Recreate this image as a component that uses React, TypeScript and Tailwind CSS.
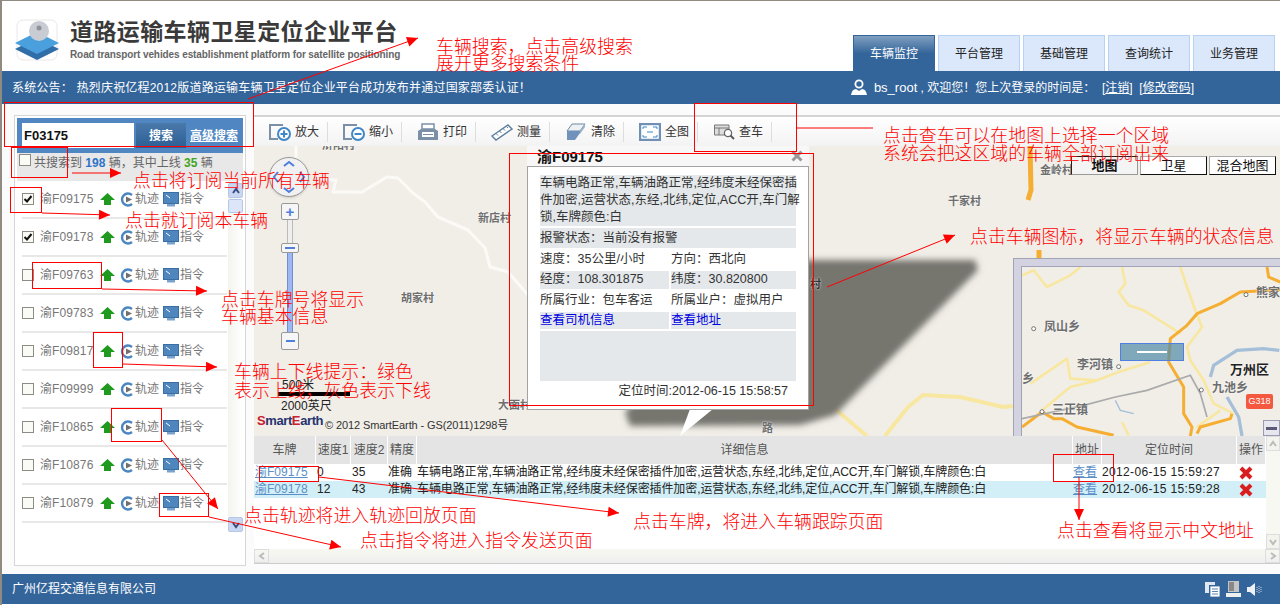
const plates: [string, boolean][] = [
  ['渝F09175', true],
  ['渝F09178', true],
  ['渝F09763', false],
  ['渝F09783', false],
  ['渝F09817', false],
  ['渝F09999', false],
  ['渝F10865', false],
  ['渝F10876', false],
  ['渝F10879', false],
];

const detail =
  '车辆电路正常,车辆油路正常,经纬度未经保密插件加密,运营状态,东经,北纬,定位,ACC开,车门解锁,车牌颜色:白';

const tableCols = 'grid-cols-[62px_35px_37px_29px_656px_29px_135px_29px]';

function Check({ on }: { on?: boolean }) {
  return (
    <span className="flex h-[12px] w-[12px] shrink-0 items-center justify-center border border-[#8c8c84] bg-[#fbfbf6]">
      {on && (
        <svg width="10" height="10" viewBox="0 0 10 10">
          <path d="M1.5 5 L4 7.5 L8.5 2" fill="none" stroke="#111" strokeWidth="2" />
        </svg>
      )}
    </span>
  );
}

function Chevron({ dir, color }: { dir: 'up' | 'down' | 'left' | 'right'; color: string }) {
  const d = {
    up: 'M2 7 L5 3 L8 7',
    down: 'M2 3 L5 7 L8 3',
    left: 'M7 2 L3 5 L7 8',
    right: 'M3 2 L7 5 L3 8',
  }[dir];
  return (
    <svg width="10" height="10" viewBox="0 0 10 10">
      <path d={d} fill="none" stroke={color} strokeWidth="2" />
    </svg>
  );
}

function UpArrow() {
  return (
    <svg width="15" height="12" viewBox="0 0 15 12" className="shrink-0">
      <path d="M7.5 0 L15 7 L11 7 L11 12 L4 12 L4 7 L0 7 Z" fill="#1f9a1f" />
    </svg>
  );
}

function TrackIcon() {
  return (
    <svg width="14" height="15" viewBox="0 0 14 15" className="shrink-0">
      <path d="M12 3 A6 6 0 1 0 12 12" fill="none" stroke="#4b86c0" strokeWidth="2.4" />
      <path d="M6 4.5 L12 7.5 L6 10.5 Z" fill="#6f6f6f" />
    </svg>
  );
}

function MonitorIcon() {
  return (
    <svg width="16" height="15" viewBox="0 0 16 15" className="shrink-0">
      <rect x="0.5" y="0.5" width="15" height="11" fill="#4f86bd" stroke="#3a6ea5" />
      <path d="M3 3 L7 6" stroke="#fff" strokeWidth="1" />
      <rect x="4" y="12" width="8" height="2.5" fill="#7aa3cc" />
    </svg>
  );
}

function ZoomIcon({ plus }: { plus?: boolean }) {
  return (
    <svg width="22" height="18" viewBox="0 0 22 18" className="shrink-0">
      <path d="M14 2 H1 V16 H9" fill="none" stroke="#7b8fa6" strokeWidth="2" />
      <circle cx="15" cy="11" r="6" fill="#fff" stroke="#3f87c7" strokeWidth="2" />
      <path d="M11.5 11 H18.5" stroke="#3f87c7" strokeWidth="2" />
      {plus && <path d="M15 7.5 V14.5" stroke="#3f87c7" strokeWidth="2" />}
    </svg>
  );
}

function PrintIcon() {
  return (
    <svg width="22" height="18" viewBox="0 0 22 18" className="shrink-0">
      <path d="M5 1 H17 V6 H5 Z" fill="#fff" stroke="#7b8fa6" strokeWidth="1.5" />
      <path d="M1 8 L4 6 H18 L21 8 V17 H1 Z" fill="#7b8fa6" />
      <rect x="5" y="9" width="12" height="5" fill="#fff" />
      <path d="M6 11.5 H16" stroke="#7b8fa6" />
    </svg>
  );
}

function RulerIcon() {
  return (
    <svg width="22" height="18" viewBox="0 0 22 18" className="shrink-0">
      <path d="M1 13 L17 2 L21 6 L5 17 Z" fill="#fff" stroke="#5f7d9c" strokeWidth="1.4" />
      <path d="M5 10.5 L7 12.5 M8.5 8 L10.5 10 M12 5.5 L14 7.5 M15.5 3.5 L17 5" stroke="#5f7d9c" />
    </svg>
  );
}

function EraserIcon() {
  return (
    <svg width="20" height="18" viewBox="0 0 20 18" className="shrink-0">
      <path d="M6 1 H19 L14 8 H1 Z" fill="#eef1f4" stroke="#6f8aa6" />
      <path d="M1 8 H14 V10 L9 17 H1 Z" fill="#6f93bb" />
      <path d="M14 8 L19 1 V4 L14 11 Z" fill="#9db3c9" />
    </svg>
  );
}

function FullIcon() {
  return (
    <svg width="22" height="18" viewBox="0 0 22 18" className="shrink-0">
      <rect x="1" y="1" width="20" height="16" fill="#fff" stroke="#6f8fb4" strokeWidth="2.4" />
      <path d="M4 6 V4 H8 M18 6 V4 H14 M4 12 V14 H8 M18 12 V14 H14 M8 9 H14" fill="none" stroke="#3f87c7" />
    </svg>
  );
}

function FindIcon() {
  return (
    <svg width="21" height="16" viewBox="0 0 21 16" className="shrink-0">
      <path d="M0.5 1 H15 V11 H0.5 Z M0.5 4 H15 M5 4 V11" fill="#ddd" stroke="#777" />
      <circle cx="14" cy="9" r="3.6" fill="#fff" stroke="#666" strokeWidth="1.3" />
      <path d="M16.5 11.5 L20 15" stroke="#555" strokeWidth="1.8" />
    </svg>
  );
}

const tools = [
  { label: '放大', icon: <ZoomIcon plus /> },
  { label: '缩小', icon: <ZoomIcon /> },
  { label: '打印', icon: <PrintIcon /> },
  { label: '测量', icon: <RulerIcon /> },
  { label: '清除', icon: <EraserIcon /> },
  { label: '全图', icon: <FullIcon /> },
  { label: '查车', icon: <FindIcon /> },
];

function Arrow({ pts, head = true }: { pts: number[][]; head?: boolean }) {
  const a = pts[pts.length - 2];
  const b = pts[pts.length - 1];
  const ang = Math.atan2(b[1] - a[1], b[0] - a[0]);
  const p = (len: number, off: number) => {
    const x = b[0] - Math.cos(ang) * len - Math.sin(ang) * off;
    const y = b[1] - Math.sin(ang) * len + Math.cos(ang) * off;
    return `${x},${y}`;
  };
  return (
    <g>
      <polyline points={pts.map((q) => q.join(',')).join(' ')} fill="none" stroke="#f00" strokeWidth="1" />
      {head && <polygon points={`${b[0]},${b[1]} ${p(11, 5)} ${p(11, -5)}`} fill="#f00" />}
    </g>
  );
}

function Note({ className, children }: { className: string; children: React.ReactNode }) {
  return (
    <div className={`absolute whitespace-nowrap text-[17.9px] leading-[18px] font-light text-[#f00] ${className}`}>
      {children}
    </div>
  );
}

function Box({ className }: { className: string }) {
  return <div className={`absolute border border-[#f00] ${className}`} />;
}

function MapLabel({ className, children }: { className: string; children: React.ReactNode }) {
  return (
    <span className={`absolute whitespace-nowrap text-[11px] leading-[13px] font-bold text-[#6e6e6e] [text-shadow:0_0_2px_#fff] ${className}`}>
      {children}
    </span>
  );
}

function MapControls() {
  return (
    <>
      <div className="absolute left-[15px] top-[11px] flex h-[40px] w-[40px] items-center justify-center rounded-full border border-[#999] bg-[#f1f1f1] shadow">
        <svg width="34" height="34" viewBox="0 0 34 34">
          <path d="M12 6 L17 2 L22 6 M12 28 L17 32 L22 28 M6 12 L2 17 L6 22 M28 12 L32 17 L28 22" fill="none" stroke="#4f7fdc" strokeWidth="2" />
        </svg>
      </div>
      <div className="absolute left-[27px] top-[57px] flex w-[18px] flex-col items-center">
        <div className="flex h-[17px] w-[18px] items-center justify-center rounded-[2px] border border-[#999] bg-[#f6f6f6] text-[15px] leading-none font-bold text-[#4f7fdc]">+</div>
        <div className="h-[23px] w-[6px] border-x border-[#bbb] bg-[#eee]" />
        <div className="flex h-[10px] w-[18px] items-center justify-center rounded-[2px] border border-[#999] bg-[#f6f6f6]">
          <div className="h-[2px] w-[10px] bg-[#4f7fdc]" />
        </div>
        <div className="h-[79px] w-[6px] border-x border-[#6f8fd0] bg-[#9db8f2]" />
        <div className="flex h-[18px] w-[18px] items-center justify-center rounded-[2px] border border-[#999] bg-[#f6f6f6]">
          <div className="h-[2px] w-[9px] bg-[#4f7fdc]" />
        </div>
      </div>
    </>
  );
}

function Overview() {
  return (
    <div className="absolute left-[759px] top-[112px] h-[178px] w-[267px] border-l border-t border-[#a3a3b8] bg-[#d2d2e0] pl-[7px] pt-[7px]">
      <div className="relative h-[170px] w-[259px] overflow-hidden border-l border-t border-[#a3a3b8] bg-[#f1eee8]">
        <svg width="258" height="169" viewBox="65 50 774 507" className="absolute inset-0">
          <g fill="none" stroke="#f8e7a0" strokeWidth="8" strokeLinejoin="round">
            <path d="M65 75 L100 60 L140 110 L210 75 L240 50" />
            <path d="M365 50 L375 100 L355 125 L385 165 L430 180 L470 205 L540 250" />
            <path d="M540 50 L560 110 L585 180 L605 230 L560 290 L570 330 L610 390 L640 460 L700 490" />
            <path d="M90 400 L200 325 L210 385 L290 390 L355 365 L450 335" />
            <path d="M125 480 L210 410 L290 390" />
            <path d="M365 515 L385 555 M590 530 L660 480" />
          </g>
          <g fill="none" stroke="#f5ae32" strokeWidth="9" strokeLinejoin="round">
            <path d="M800 50 L805 80 L840 95" />
            <path d="M840 118 L720 125 L660 160 L590 190 L560 225 L510 265 L505 335 L550 410 L550 490 L575 530 L570 557" />
            <path d="M65 530 L125 485 L160 505 L185 505 L230 530 L340 555" />
            <path d="M590 550 L600 530 L690 505 L695 490" />
          </g>
          <path d="M65 505 L250 465 L345 440 L440 420 L570 375 L600 430 L620 500" fill="none" stroke="#aaa" strokeWidth="5" />
          <path d="M630 380 L640 345 L710 300 L790 295 L837 300 M680 440 L715 500 L725 557" fill="none" stroke="#a5bfd8" strokeWidth="10" />
          <path d="M345 450 L360 480 L400 490" fill="none" stroke="#a5bfd8" strokeWidth="4" />
          {[[100, 235], [355, 349], [603, 419], [125, 484], [737, 133]].map(([x, y]) => (
            <circle key={x} cx={x} cy={y} r="6" fill="#fff" stroke="#555" strokeWidth="2.4" />
          ))}
        </svg>
        <MapLabel className="left-[22px] top-[54px] text-[12px]">凤山乡</MapLabel>
        <MapLabel className="left-[55px] top-[92px] text-[12px]">李河镇</MapLabel>
        <MapLabel className="left-[190px] top-[115px] text-[12px]">九池乡</MapLabel>
        <MapLabel className="left-[30px] top-[137px] text-[12px]">三正镇</MapLabel>
        <MapLabel className="left-[234px] top-[20px] text-[12px]">熊家</MapLabel>
        <MapLabel className="left-0 top-[106px] text-[12px]">乡</MapLabel>
        <MapLabel className="left-[208px] top-[96px] text-[13px] !text-[#222]">万州区</MapLabel>
        <span className="absolute left-[224px] top-[127px] flex h-[15px] w-[27px] items-center justify-center rounded-[2px] bg-[#f4583f] text-[9px] text-white">G318</span>
        <div className="absolute left-[98px] top-[76px] flex h-[18px] w-[64px] items-center justify-center border border-[#4f7fe0] bg-[#4f8aa8]/70">
          <div className="h-[2px] w-[30px] bg-white" />
        </div>
        <div className="absolute left-[241px] top-[153px] flex h-[16px] w-[17px] items-center justify-center border border-[#9a9ab0] bg-[#e6e6ee]">
          <div className="h-[3px] w-[11px] bg-[#5a5a78]" />
        </div>
      </div>
    </div>
  );
}

function Popup() {
  return (
    <div className="absolute left-[273px] top-0 w-[282px] text-[12.5px] leading-[17px] text-[#333]">
      <div className="flex h-[20px] items-center justify-between bg-[#f7f7f7] pl-[10px] pr-[6px]">
        <span className="text-[15px] font-bold text-[#111]">渝F09175</span>
        <svg width="12" height="12" viewBox="0 0 12 12">
          <path d="M1.5 1.5 L10.5 10.5 M10.5 1.5 L1.5 10.5" stroke="#999" strokeWidth="3" />
        </svg>
      </div>
      <div className="flex h-[244px] flex-col gap-[2px] border border-[#a3a3a3] bg-white px-[12px] pt-[8px]">
        <div className="h-[51px] whitespace-nowrap bg-[#e4e8ea]">
          车辆电路正常,车辆油路正常,经纬度未经保密插
          <br />
          件加密,运营状态,东经,北纬,定位,ACC开,车门解
          <br />
          锁,车牌颜色:白
        </div>
        <div className="flex h-[20px] items-center bg-[#e4e8ea]">报警状态：当前没有报警</div>
        <div className="grid h-[19px] grid-cols-[129px_125px] items-center gap-[2px]">
          <span>速度：35公里/小时</span>
          <span>方向：西北向</span>
        </div>
        <div className="grid h-[18px] grid-cols-[129px_125px] gap-[2px]">
          <span className="bg-[#e4e8ea]">经度：108.301875</span>
          <span className="bg-[#e4e8ea]">纬度：30.820800</span>
        </div>
        <div className="grid h-[19px] grid-cols-[129px_125px] items-center gap-[2px]">
          <span>所属行业：包车客运</span>
          <span>所属业户：虚拟用户</span>
        </div>
        <div className="grid h-[17px] grid-cols-[129px_125px] gap-[2px] text-[#0000e0]">
          <span className="bg-[#e4e8ea]">查看司机信息</span>
          <span className="bg-[#e4e8ea]">查看地址</span>
        </div>
        <div className="h-[50px] bg-[#e4e8ea]" />
        <div className="pr-[8px] text-right">定位时间:2012-06-15 15:58:57</div>
      </div>
    </div>
  );
}

function MapView() {
  return (
    <div className="relative h-[290px] shrink-0 overflow-hidden bg-[#f1eee8]">
      <svg width="1026" height="290" viewBox="254 146 1026 290" className="absolute inset-0">
        <defs>
          <filter id="shadow-blur">
            <feGaussianBlur stdDeviation="3" />
          </filter>
        </defs>
        <g fill="none" stroke="#fbfaf6" strokeWidth="3" strokeLinejoin="round">
          <path d="M296 146 V160" />
          <path d="M320 179 L336 180 L333 192 L362 192 L387 177 L398 178 L413 193 L425 202 L438 217 L468 230 L485 248 L490 267 L508 272 L528 295" />
        </g>
        <path d="M1030 146 L1031 190 L1028 200 M1039 250 V258" fill="none" stroke="#f5ae32" strokeWidth="5" />
        <g fill="none" stroke="#f8e7a0" strokeWidth="4" strokeLinejoin="round">
          <path d="M885 436 L908 407 L923 395 L960 397 L1003 407 L1013 406" />
          <path d="M808 386 L867 436" />
        </g>
        <polygon points="625,412 780,260 975,260 978,270 835,415 800,425 630,426" fill="#76746e" filter="url(#shadow-blur)" />
        <polygon points="690,409 713,409 680,436" fill="#fff" />
      </svg>
      <MapLabel className="left-[68px] top-[-7px]">浒阳村</MapLabel>
      <MapLabel className="left-[224px] top-[66px]">新店村</MapLabel>
      <MapLabel className="left-[147px] top-[146px]">胡家村</MapLabel>
      <MapLabel className="left-[244px] top-[253px]">大面村</MapLabel>
      <MapLabel className="left-[556px] top-[132px] !text-[#333]">村</MapLabel>
      <MapLabel className="left-[508px] top-[276px]">路</MapLabel>
      <MapLabel className="left-[694px] top-[49px]">千家村</MapLabel>
      <MapLabel className="left-[786px] top-[18px]">金岭村</MapLabel>
      <MapControls />
      <div className="absolute left-[817px] top-[10px] flex gap-[2px] text-[13px] leading-[17px] text-[#111]">
        <div className="flex h-[19px] w-[67px] items-center justify-center border border-b-[#999] border-l-[#222] border-r-[#999] border-t-[#222] bg-[#f4f4f4] font-bold">地图</div>
        <div className="flex h-[19px] w-[67px] items-center justify-center border border-b-[#111] border-l-[#aaa] border-r-[#111] border-t-[#aaa] bg-white">卫星</div>
        <div className="flex h-[19px] w-[67px] items-center justify-center border border-b-[#111] border-l-[#aaa] border-r-[#111] border-t-[#aaa] bg-white">混合地图</div>
      </div>
      <div className="absolute left-[24px] top-[233px] w-[72px] text-[12px] leading-[13px] text-[#222]">
        <div className="pl-[4px]">500米</div>
        <div className="h-[4px] bg-black" />
        <div className="pl-[3px] pt-[4px]">2000英尺</div>
      </div>
      <div className="absolute left-[3px] top-[267px] text-[13px] leading-[16px] font-bold tracking-[-0.4px] text-[#27346f]">
        <span className="text-[#c8202c]">S</span>mart<span className="text-[#c8202c]">E</span>arth
      </div>
      <div className="absolute left-[71px] top-[272px] text-[11px] leading-[14px] tracking-[-0.1px] text-[#333]">© 2012 SmartEarth - GS(2011)1298号</div>
      <Popup />
      <Overview />
    </div>
  );
}

function ResultRow({ plate, speed, speed2, time, alt }: { plate: string; speed: string; speed2: string; time: string; alt?: boolean }) {
  return (
    <div className={`grid h-[17px] items-center whitespace-nowrap text-[12px] leading-[17px] text-[#222] ${tableCols} ${alt ? 'bg-[#d2eef6]' : 'bg-white'}`}>
      <span className="pl-px text-[#5b8fc8] underline">{plate}</span>
      <span className="pl-px">{speed}</span>
      <span className="pl-px">{speed2}</span>
      <span>准确</span>
      <span className="tracking-[-0.1px]">{detail}</span>
      <span className="text-[#5b8fc8] underline">查看</span>
      <span className="tracking-[0.35px]">{time}</span>
      <span className="flex pl-[2px]">
        <svg width="14" height="14" viewBox="0 0 14 14">
          <path d="M2 2 L12 12 M12 2 L2 12" stroke="#d81e1e" strokeWidth="4" />
        </svg>
      </span>
    </div>
  );
}

function ResultTable() {
  const heads = ['车牌', '速度1', '速度2', '精度', '详细信息', '地址', '定位时间', '操作'];
  return (
    <div className="flex h-[128px] flex-col border-b border-[#ccc]">
      <div className="flex min-h-0 flex-1">
        <div className="flex-1 bg-white">
          <div className={`grid h-[28px] bg-[#e4e4e4] text-[12px] text-[#555] ${tableCols}`}>
            {heads.map((h) => (
              <span key={h} className="flex items-center justify-center whitespace-nowrap border-r border-white">{h}</span>
            ))}
          </div>
          <ResultRow plate="渝F09175" speed="0" speed2="35" time="2012-06-15 15:59:27" />
          <ResultRow plate="渝F09178" speed="12" speed2="43" time="2012-06-15 15:59:28" alt />
        </div>
        <div className="flex w-[14px] flex-col justify-between bg-[#f8f8f2]">
          <div className="flex h-[15px] items-center justify-center border border-[#ddd] bg-[#f4f4ee]"><Chevron dir="up" color="#bbb" /></div>
          <div className="flex h-[15px] items-center justify-center border border-[#ddd] bg-[#f4f4ee]"><Chevron dir="down" color="#bbb" /></div>
        </div>
      </div>
      <div className="flex h-[14px] justify-between bg-gradient-to-b from-[#f8f8f2] to-[#eee]">
        <div className="flex w-[15px] items-center justify-center border border-[#ddd]"><Chevron dir="left" color="#bbb" /></div>
        <div className="flex w-[15px] items-center justify-center border border-[#ddd]"><Chevron dir="right" color="#bbb" /></div>
      </div>
    </div>
  );
}

function VehiclePanel() {
  return (
    <div className="h-[451px] w-[232px] shrink-0 border border-[#d6d6d6] bg-white p-[2px] text-[12px]">
      <div className="flex h-[35px] items-center bg-[#5086c1] pl-[5px]">
        <input readOnly value="F03175" className="h-[25px] w-[112px] bg-white pl-[2px] text-[13px] font-bold text-[#111] outline-none" />
        <button className="ml-[2px] h-[25px] w-[50px] bg-gradient-to-b from-[#4a79ab] to-[#2c5f94] text-[12px] font-bold text-white">搜索</button>
        <a className="ml-[4px] text-[12px] font-bold text-white underline">高级搜索</a>
      </div>
      <div className="flex h-[28px] items-start gap-[3px] bg-[#e8e8e8] pl-[2px] pt-px text-[#666]">
        <Check />
        <span>
          共搜索到 <b className="text-[#2e74c9]">198</b> 辆，其中上线 <b className="text-[#3fa51f]">35</b> 辆
        </span>
      </div>
      <div className="flex">
        <div className="ml-[5px] w-[206px]">
          {plates.map(([plate, on]) => (
            <div key={plate} className="flex h-[38px] items-center border-b-2 border-[#e8e8e8] text-[#777]">
              <Check on={on} />
              <span className="ml-[6px] w-[60px] tracking-[0.1px]">{plate}</span>
              <UpArrow />
              <span className="ml-[5px]"><TrackIcon /></span>
              <span className="ml-px">轨迹</span>
              <span className="ml-[4px]"><MonitorIcon /></span>
              <span className="ml-px">指令</span>
            </div>
          ))}
        </div>
        <div className="ml-[1px] flex h-[351px] w-[15px] flex-col gap-px bg-gradient-to-r from-[#f4f4ee] to-white pt-[2px]">
          <div className="flex h-[15px] shrink-0 items-center justify-center rounded-[2px] border border-[#b7c7ea] bg-[#c9d7f3]"><Chevron dir="up" color="#3a4f80" /></div>
          <div className="h-[14px] shrink-0 rounded-[2px] border border-[#b7c7ea] bg-[#dde6f8]" />
          <div className="mt-auto flex h-[15px] shrink-0 items-center justify-center rounded-[2px] border border-[#b7c7ea] bg-[#c9d7f3]"><Chevron dir="down" color="#3a4f80" /></div>
        </div>
      </div>
    </div>
  );
}

function Annotations() {
  return (
    <>
      <svg width="1280" height="605" className="pointer-events-none absolute inset-0">
        <Arrow pts={[[248, 99], [418, 38]]} />
        <Arrow pts={[[72, 173], [121, 173]]} />
        <Arrow pts={[[42, 213], [77, 214], [110, 215]]} />
        <Arrow pts={[[102, 289], [207, 291]]} />
        <Arrow pts={[[123, 364], [217, 367]]} />
        <Arrow pts={[[162, 440], [218, 509]]} />
        <Arrow pts={[[209, 517], [341, 547]]} />
        <Arrow pts={[[319, 477], [619, 513]]} />
        <Arrow pts={[[1079, 477], [1079, 520]]} />
        <Arrow pts={[[797, 128], [873, 128]]} head={false} />
        <Arrow pts={[[827, 287], [955, 235]]} />
      </svg>
      <Box className="left-[4px] top-[102px] h-[45px] w-[250px]" />
      <Box className="left-[11px] top-[147px] h-[31px] w-[57px]" />
      <Box className="left-[10px] top-[187px] h-[26px] w-[32px]" />
      <Box className="left-[32px] top-[262px] h-[27px] w-[70px]" />
      <Box className="left-[93px] top-[332px] h-[36px] w-[30px]" />
      <Box className="left-[111px] top-[408px] h-[34px] w-[51px]" />
      <Box className="left-[159px] top-[493px] h-[24px] w-[50px]" />
      <Box className="left-[509px] top-[153px] h-[253px] w-[305px]" />
      <Box className="left-[694px] top-[103px] h-[49px] w-[103px]" />
      <Box className="left-[259px] top-[466px] h-[16px] w-[60px]" />
      <Box className="left-[1053px] top-[454px] h-[28px] w-[61px]" />
      <Note className="left-[436px] top-[38px]">车辆搜索，点击高级搜索</Note>
      <Note className="left-[436px] top-[55px]">展开更多搜索条件</Note>
      <Note className="left-[883px] top-[127px]">点击查车可以在地图上选择一个区域</Note>
      <Note className="left-[883px] top-[145px]">系统会把这区域的车辆全部订阅出来</Note>
      <Note className="left-[133px] top-[172px]">点击将订阅当前所有车辆</Note>
      <Note className="left-[125px] top-[212px]">点击就订阅本车辆</Note>
      <Note className="left-[221px] top-[291px]">点击车牌号将显示</Note>
      <Note className="left-[221px] top-[308px]">车辆基本信息</Note>
      <Note className="left-[234px] top-[363px]">车辆上下线提示：绿色</Note>
      <Note className="left-[234px] top-[382px]">表示上线，灰色表示下线</Note>
      <Note className="left-[970px] top-[228px]">点击车辆图标，将显示车辆的状态信息</Note>
      <Note className="left-[244px] top-[507px]">点击轨迹将进入轨迹回放页面</Note>
      <Note className="left-[360px] top-[532px]">点击指令将进入指令发送页面</Note>
      <Note className="left-[633px] top-[513px]">点击车牌，将进入车辆跟踪页面</Note>
      <Note className="left-[1057px] top-[522px]">点击查看将显示中文地址</Note>
    </>
  );
}

export default function App() {
  const navs = ['平台管理', '基础管理', '查询统计', '业务管理'];
  return (
    <div className="relative h-[605px] w-[1280px] overflow-hidden bg-white font-['Liberation_Sans','Noto_Sans_CJK_SC',sans-serif]">
      <div className="h-[605px] border-l-2 border-t border-[#8f8b80]">
        <header className="flex h-[70px] items-start">
          <svg width="46" height="44" viewBox="0 0 46 44" className="ml-[12px] mt-[17px] shrink-0">
            <rect x="3" y="2" width="40" height="40" rx="6" fill="#fff" stroke="#e8e8e8" />
            <path d="M23 20 L45 31 L23 42 L1 31 Z" fill="#2f6ea8" />
            <path d="M23 14 L45 25 L23 36 L1 25 Z" fill="#49a0dc" />
            <circle cx="25" cy="13" r="10" fill="#c9ccd2" />
            <circle cx="25" cy="10" r="2.5" fill="#8e9299" />
          </svg>
          <div className="ml-[10px] mt-[18px] w-[340px] shrink-0">
            <div className="whitespace-nowrap text-[23px] leading-[27px] font-bold tracking-[0.4px] text-[#3a3a3a]">道路运输车辆卫星定位企业平台</div>
            <div className="mt-[2px] whitespace-nowrap text-[10px] leading-[13px] font-bold tracking-[-0.1px] text-[#666]">Road transport vehides establishment platform for satellite positioning</div>
          </div>
          <nav className="ml-auto mr-[5px] mt-[34px] flex gap-[3px] text-[12px]">
            <div className="flex h-[36px] w-[82px] items-center justify-center border-x border-t border-[#33659a] bg-gradient-to-b from-[#7f9fc0] via-[#33659a] to-[#33659a] text-white">车辆监控</div>
            {navs.map((n) => (
              <div key={n} className="flex h-[36px] w-[82px] items-center justify-center border-x border-t border-[#b8d2f4] bg-[#dbe8fb] text-[#222]">{n}</div>
            ))}
          </nav>
        </header>
        <div className="flex h-[33px] items-center justify-between bg-[#33659a] pl-[10px] pr-[86px] text-[12px] text-white">
          <span className="tracking-[0.2px]">系统公告： 热烈庆祝亿程2012版道路运输车辆卫星定位企业平台成功发布并通过国家部委认证！</span>
          <span className="flex items-center gap-[7px]">
            <svg width="16" height="17" viewBox="0 0 16 17">
              <circle cx="8" cy="5" r="3.6" fill="none" stroke="#fff" strokeWidth="1.8" />
              <path d="M0 16 Q1 10 5 10 L8 12 L11 10 Q15 10 16 16 Z" fill="#fff" />
            </svg>
            <span>
              <span className="text-[13px]">bs_root</span> , 欢迎您！您上次登录的时间是： &nbsp;[<u>注销</u>] &nbsp;[<u>修改密码</u>]
            </span>
          </span>
        </div>
        <main className="flex h-[470px] bg-[#fbfbfb] pl-[12px] pt-[11px]">
          <VehiclePanel />
          <section className="ml-[8px] flex min-w-0 flex-1 flex-col">
            <div className="flex h-[31px] shrink-0 items-center border-t-2 border-[#d4d4d4] bg-gradient-to-b from-white to-[#f3f3f3] pl-[15px] text-[12px] text-[#333]">
              {tools.map((t) => (
                <div key={t.label} className="mr-[15px] flex h-[20px] w-[59px] shrink-0 items-center gap-[4px] border-r border-[#ddd]">
                  <span className="flex w-[22px] justify-center">{t.icon}</span>
                  <span>{t.label}</span>
                </div>
              ))}
            </div>
            <MapView />
            <ResultTable />
          </section>
        </main>
        <footer className="flex h-[30px] items-center justify-between bg-[#33659a] pl-[10px] pr-[18px] text-[12px] text-white">
          <span>广州亿程交通信息有限公司</span>
          <span className="flex items-center gap-[6px]">
            <svg width="15" height="15" viewBox="0 0 15 15">
              <path d="M0 0 H10 V3 H4 V11 H0 Z" fill="#dfe8f2" />
              <path d="M5 4 H15 V15 H5 Z M7 7 H13 M7 9.5 H13 M7 12 H13" fill="#fff" stroke="#33659a" strokeWidth="0.8" />
            </svg>
            <svg width="15" height="16" viewBox="0 0 15 16">
              <rect x="2" y="0" width="11" height="11" fill="#c4c4c4" />
              <rect x="3" y="1" width="5" height="9" fill="#888" />
              <rect x="0" y="12" width="15" height="4" fill="#eee" />
            </svg>
            <svg width="15" height="15" viewBox="0 0 15 15">
              <path d="M0 5 H3 L8 1 V14 L3 10 H0 Z" fill="#eef2f6" />
              <path d="M10 5 V10 M12 4 V11 M14 5 V10" stroke="#cfdbe8" strokeDasharray="1 1" />
            </svg>
          </span>
        </footer>
      </div>
      <Annotations />
    </div>
  );
}
